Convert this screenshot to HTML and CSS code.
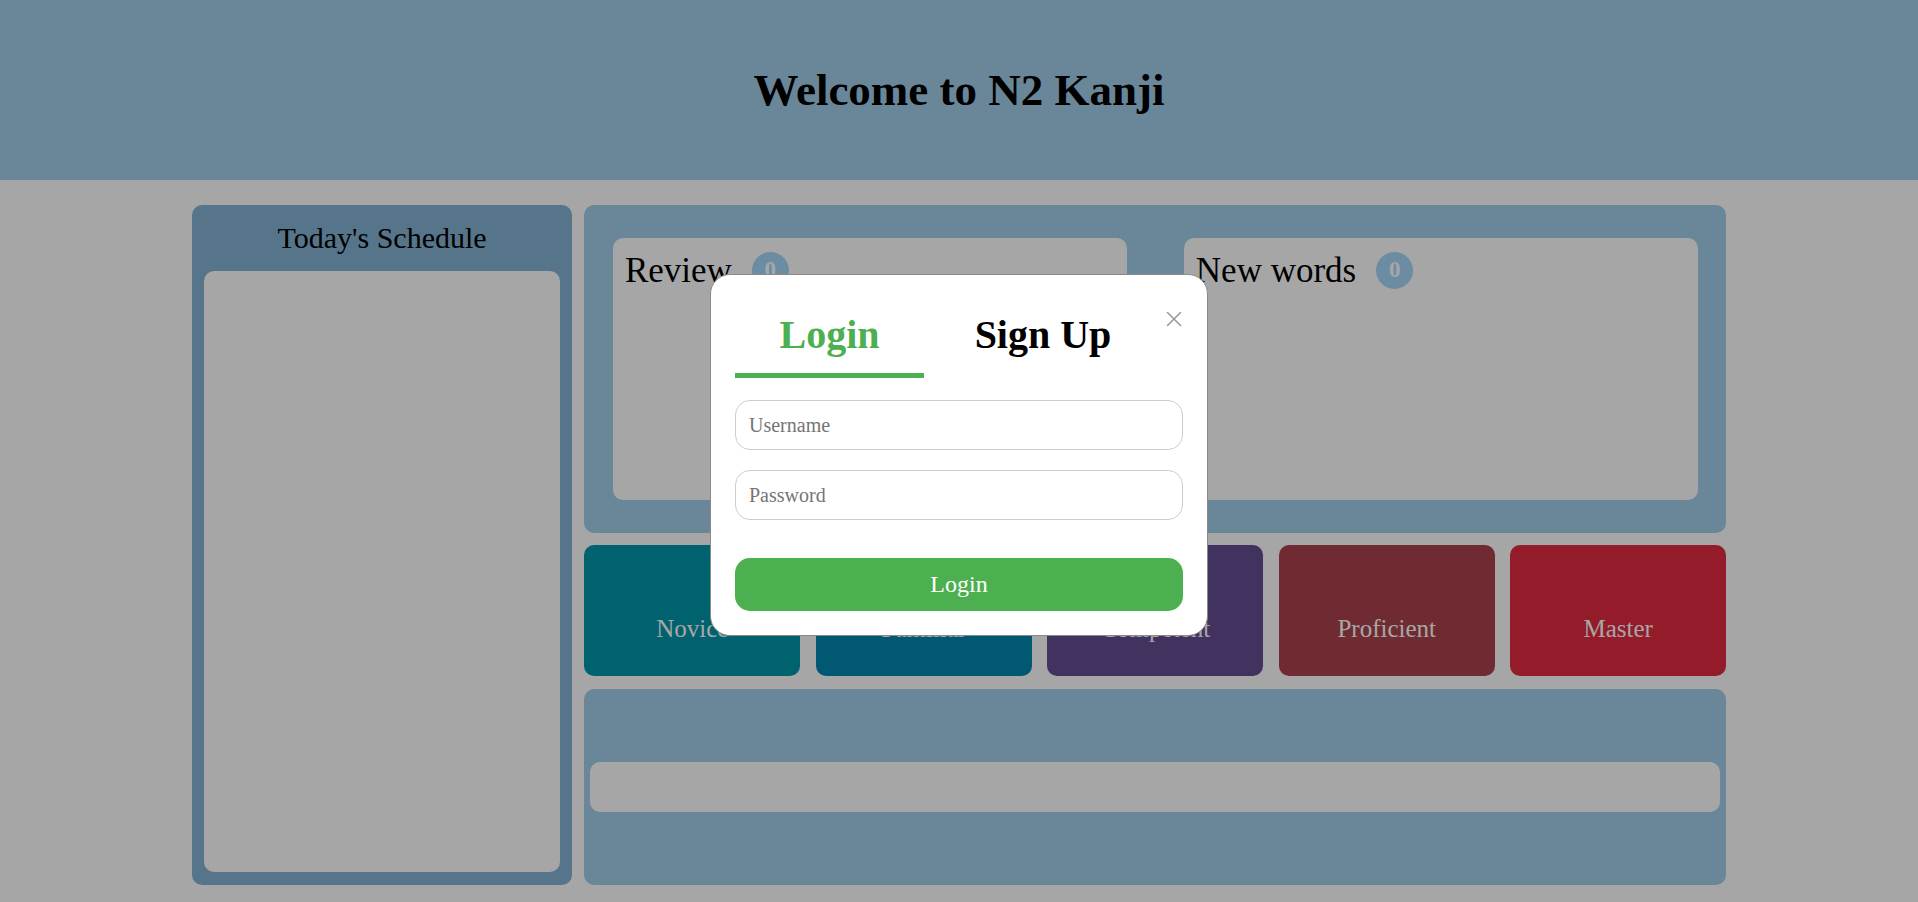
FILE: index.html
```html
<!DOCTYPE html>
<html lang="en">
<head>
<meta charset="utf-8">
<title>N2 Kanji</title>
<link rel="stylesheet" href="styles.css">
</head>
<body>
<header class="site-header">
  <h1 class="site-title">Welcome to N2 Kanji</h1>
</header>

<main class="layout">
  <aside class="schedule">
    <h2 class="schedule-title">Today's Schedule</h2>
    <div class="schedule-list"></div>
  </aside>

  <section class="content">
    <div class="summary">
      <div class="summary-card">
        <span class="summary-title">Review</span>
        <span class="badge">0</span>
      </div>
      <div class="summary-card">
        <span class="summary-title">New words</span>
        <span class="badge">0</span>
      </div>
    </div>

    <div class="levels">
      <div class="level level-novice">Novice</div>
      <div class="level level-familiar">Familiar</div>
      <div class="level level-competent">Competent</div>
      <div class="level level-proficient">Proficient</div>
      <div class="level level-master">Master</div>
    </div>

    <div class="search-panel">
      <div class="search-bar"></div>
    </div>
  </section>
</main>

<div class="backdrop"></div>

<div class="modal">
  <button class="close-btn" aria-label="Close">
    <svg width="16" height="16" viewBox="0 0 16 16"><path d="M1.5 1.5 L14.5 14.5 M14.5 1.5 L1.5 14.5" stroke="#9a9a9a" stroke-width="1.6" fill="none" stroke-linecap="round"/></svg>
  </button>
  <div class="tabs">
    <div class="tab tab-active">Login</div>
    <div class="tab tab-signup">Sign Up</div>
  </div>
  <form class="login-form">
    <input class="field field-user" type="text" placeholder="Username">
    <input class="field field-pass" type="password" placeholder="Password">
    <button class="submit" type="button">Login</button>
  </form>
</div>
</body>
</html>
```
FILE: styles.css
```css
* { box-sizing: border-box; }

html, body {
  margin: 0;
  padding: 0;
}

body {
  background: #ffffff;
  font-family: "Liberation Serif", "Times New Roman", serif;
  color: #000;
  height: 902px;
  overflow: hidden;
}

.site-header {
  height: 180px;
  background: #a3d0eb;
  display: flex;
  align-items: center;
  justify-content: center;
}

.site-title {
  margin: 0 0 1px;
  font-size: 45px;
  font-weight: bold;
}

.layout {
  width: 80%;
  margin: 25px auto 0;
  height: 680px;
  display: grid;
  grid-template-columns: 1fr 3fr;
  gap: 12px;
}

.schedule {
  background: #86b4d4;
  border-radius: 10px;
  padding: 0 12px 13px;
  display: flex;
  flex-direction: column;
}

.schedule-title {
  margin: 16px 0 16px;
  font-size: 30px;
  font-weight: normal;
  text-align: center;
}

.schedule-list {
  flex: 1;
  background: #fff;
  border-radius: 10px;
}

.content {
  display: grid;
  grid-template-rows: 5fr 2fr 3fr;
  gap: 12.5px;
  min-height: 0;
}

.summary {
  background: #a3d0eb;
  border-radius: 10px;
  display: flex;
  justify-content: space-around;
  align-items: center;
}

.summary-card {
  width: 45%;
  height: 80%;
  background: #fff;
  border-radius: 10px;
  padding: 13px 12px;
  display: flex;
  align-items: flex-start;
  align-content: flex-start;
  flex-wrap: wrap;
}

.summary-title {
  font-size: 35px;
  line-height: 40px;
}

.badge {
  width: 37px;
  height: 37px;
  margin: 1px 0 0 20px;
  border-radius: 50%;
  background: #a5d8fb;
  color: #ffffff;
  font-weight: bold;
  font-size: 23px;
  display: flex;
  align-items: center;
  justify-content: center;
}

.levels {
  display: grid;
  grid-template-columns: repeat(5, 1fr);
  gap: 15.5px;
}

.level {
  border-radius: 10px;
  color: #fff;
  font-size: 25px;
  display: flex;
  align-items: flex-end;
  justify-content: center;
  padding-bottom: 33px;
}

.level-novice { background: #0097a9; }
.level-familiar { background: #0088b1; }
.level-competent { background: #644e92; }
.level-proficient { background: #ab414d; }
.level-master { background: #e42b41; }

.search-panel {
  background: #a3d0eb;
  border-radius: 10px;
  display: flex;
  align-items: center;
  justify-content: center;
}

.search-bar {
  width: 99%;
  height: 50px;
  background: #fff;
  border-radius: 10px;
}

.backdrop {
  position: fixed;
  inset: 0;
  background: rgba(0, 0, 0, 0.35);
}

.modal {
  position: fixed;
  top: 274px;
  left: 50%;
  transform: translateX(-50%);
  width: 498px;
  background: #fff;
  border: 1px solid #8a8a8a;
  border-radius: 20px;
  padding: 24px;
}

.close-btn {
  position: absolute;
  top: 36px;
  right: 25px;
  width: 16px;
  height: 16px;
  padding: 0;
  border: none;
  background: none;
  display: block;
}

.close-btn svg { display: block; }

.tabs {
  display: flex;
}

.tab {
  font-size: 40px;
  font-weight: bold;
  text-align: center;
  padding: 12px 0 15px;
  border-bottom: 5px solid transparent;
}

.tab-active {
  width: 189px;
  color: #4caf50;
  border-bottom-color: #4caf50;
}

.tab-signup {
  width: 238px;
  color: #000;
}

.login-form {
  display: flex;
  flex-direction: column;
}

.field {
  width: 100%;
  height: 50px;
  border: 1px solid #cccccc;
  border-radius: 15px;
  padding: 0 13px;
  font-family: "Liberation Serif", "Times New Roman", serif;
  font-size: 20px;
  outline: none;
}

.field::placeholder { color: #757575; }

.field-user { margin-top: 22px; }
.field-pass { margin-top: 20px; }

.submit {
  margin-top: 38px;
  height: 53px;
  width: 100%;
  border: none;
  border-radius: 15px;
  background: #4caf50;
  color: #fff;
  font-family: "Liberation Serif", "Times New Roman", serif;
  font-size: 24px;
}
```
